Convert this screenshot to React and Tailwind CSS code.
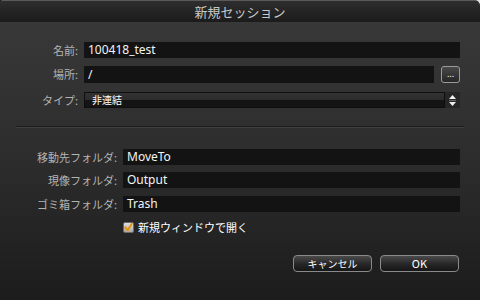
const jp = { fontFamily: '"Noto Sans CJK JP", "Noto Sans", sans-serif' };
const lat = { fontFamily: '"Noto Sans", "Noto Sans CJK JP", sans-serif' };

const Label = ({ w, children }) => (
  <div
    className={`${w} shrink-0 text-right text-[11px] leading-none text-[#b4b4b4] pr-[6px]`}
    style={jp}
  >
    {children}
  </div>
);

const Field = ({ value, h = "h-[16px]" }) => (
  <div
    className={`flex-1 ${h} bg-[#131313] flex items-center pl-[4px] text-[12px] text-[#f4f4f4] leading-none`}
    style={lat}
  >
    {value}
  </div>
);

const Button = ({ children, className = "" }) => (
  <button
    className={`w-[79px] h-[17px] rounded-[4px] border border-[#8a8a8a] bg-[linear-gradient(#4a4a4a,#262626_55%,#161616)] text-white text-[10px] leading-none flex items-center justify-center ${className}`}
    style={jp}
  >
    {children}
  </button>
);

export default function App() {
  return (
    <div className="w-[480px] h-[300px] bg-[linear-gradient(to_right,#151515,#151515_95%,#e6e6e6)] overflow-hidden">
      <div className="w-full h-full rounded-tr-[6px] rounded-tl-[3px] overflow-hidden flex flex-col bg-[linear-gradient(#3a3a3a,#2c2c2c_55%,#1c1c1c)]">
        {/* title bar */}
        <div
          className="h-[22px] shrink-0 border-t border-[#5a5a5a] bg-[linear-gradient(#2e2e2e,#1b1b1b)] flex items-center justify-center text-[13px] text-[#c8c8c8] leading-none"
          style={jp}
        >
          新規セッション
        </div>

        <div className="flex flex-col pr-[20px] pt-[20px]">
          <div className="flex items-center">
            <Label w="w-[84px]">名前:</Label>
            <Field value="100418_test" />
          </div>
          <div className="flex items-center mt-[8px]">
            <Label w="w-[84px]">場所:</Label>
            <Field value="/" h="h-[17px]" />
            <div className="ml-[7px] w-[19px] h-[17px] rounded-[3px] border border-[#9a9a9a] bg-[linear-gradient(#484848,#262626)] flex items-center justify-center text-white text-[9px] leading-none pb-[3px]">
              ...
            </div>
          </div>
          <div className="flex items-center mt-[9px]">
            <Label w="w-[84px]">タイプ:</Label>
            <div className="flex-1 h-[16px] relative border border-[#0e0e0e] bg-[linear-gradient(#323232,#2c2c2c_48%,#141414_52%,#141414)] flex items-center pl-[7px] text-[10px] text-white leading-none" style={jp}>
              非連結
            </div>
            <div className="w-[15px] h-[16px] bg-[#262626] flex items-center justify-center">
              <svg width="9" height="13" viewBox="0 0 9 13">
                <path d="M4.5 1 L8 5 L1 5 Z" fill="#f0f0f0" />
                <path d="M1 6.5 H8" stroke="#777" strokeWidth="0.8" />
                <path d="M1 8 L8 8 L4.5 12 Z" fill="#f0f0f0" />
              </svg>
            </div>
          </div>

          <div className="ml-[16px] mr-[-4px] mt-[18px] h-[2px] border-t border-[#1d1d1d] border-b border-b-[#404040]"></div>

          <div className="flex items-center mt-[21px]">
            <Label w="w-[123px]">移動先フォルダ:</Label>
            <Field value="MoveTo" />
          </div>
          <div className="flex items-center mt-[7px]">
            <Label w="w-[123px]">現像フォルダ:</Label>
            <Field value="Output" />
          </div>
          <div className="flex items-center mt-[8px]">
            <Label w="w-[123px]">ゴミ箱フォルダ:</Label>
            <Field value="Trash" />
          </div>

          <div className="flex items-center mt-[10px] pl-[123px]">
            <svg width="11" height="11" viewBox="0 0 11 11">
              <defs>
                <linearGradient id="cb" x1="0" y1="0" x2="0" y2="1">
                  <stop offset="0" stopColor="#e2e2e2" />
                  <stop offset="1" stopColor="#a8a8a8" />
                </linearGradient>
              </defs>
              <rect x="0.5" y="0.5" width="10" height="10" rx="1.5" fill="url(#cb)" stroke="#6a6a6a" />
              <path d="M2.2 5.2 L4.6 8.4 L8.8 1.8" fill="none" stroke="#e8940e" strokeWidth="2" strokeLinecap="round" strokeLinejoin="round" />
            </svg>
            <span className="ml-[4px] text-[11px] text-white leading-none" style={jp}>
              新規ウィンドウで開く
            </span>
          </div>

          <div className="flex justify-end gap-[8px] mt-[22px] pr-[1px]">
            <Button>キャンセル</Button>
            <Button className="text-[11px]">OK</Button>
          </div>
        </div>
      </div>
    </div>
  );
}
